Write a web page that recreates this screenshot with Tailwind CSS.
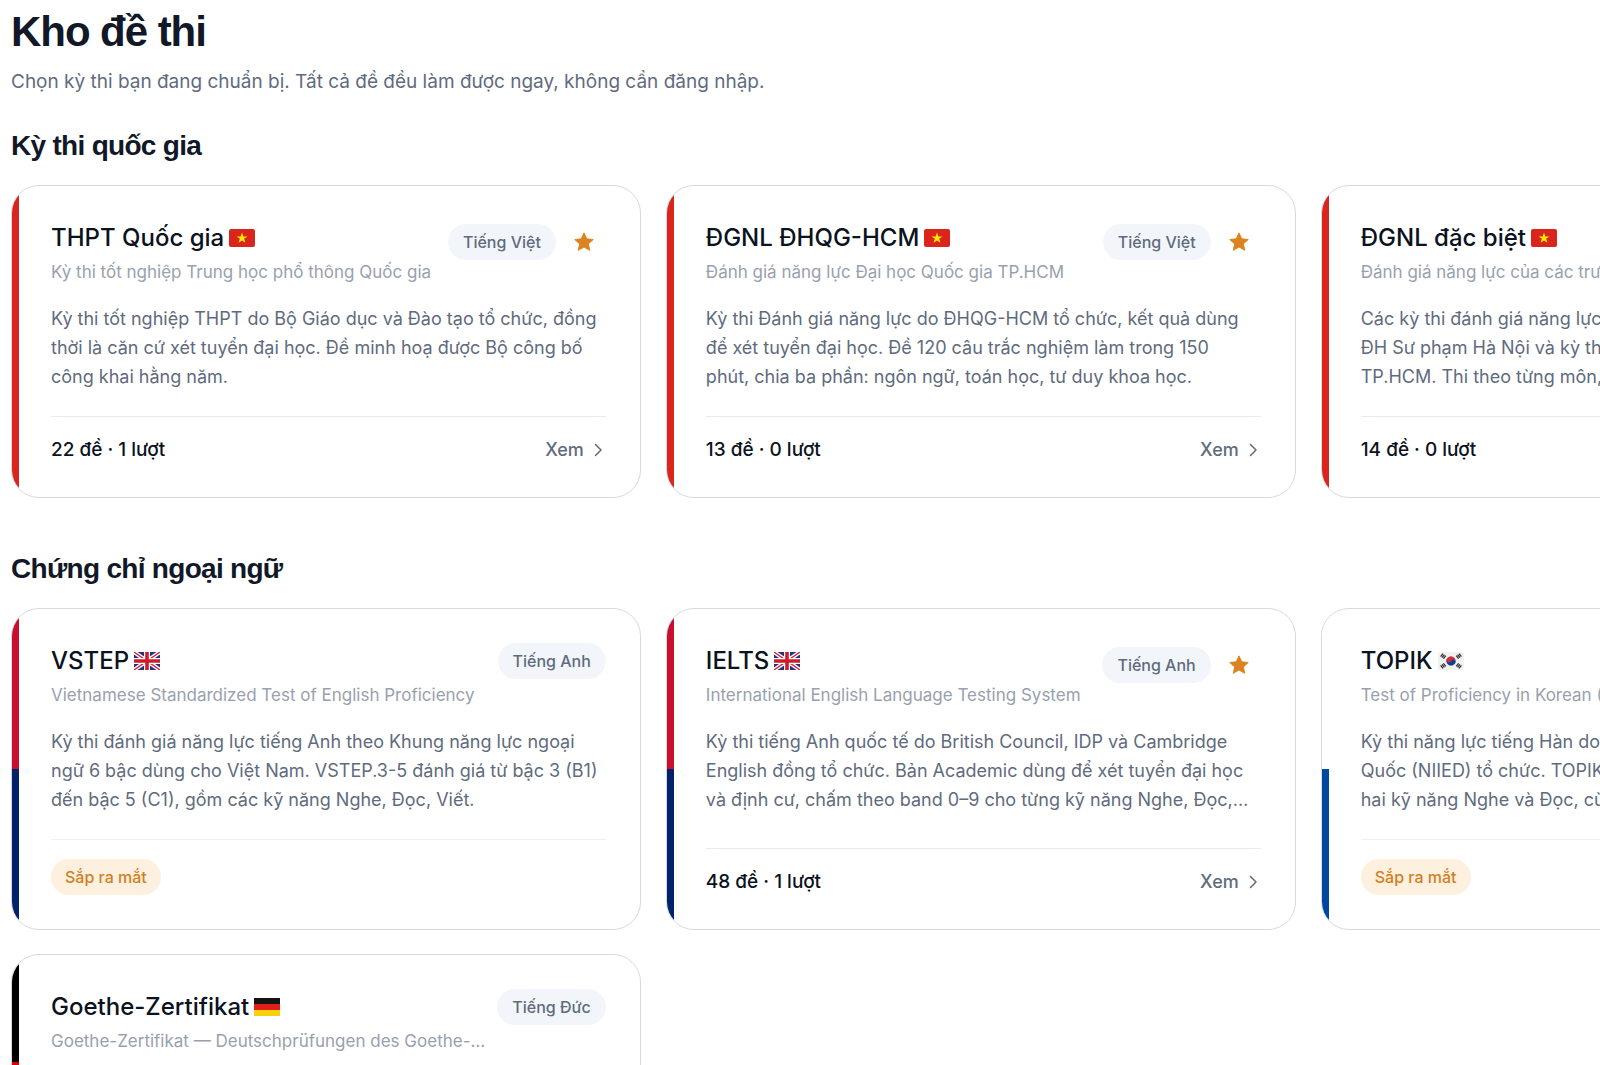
<!DOCTYPE html>
<html lang="vi">
<head>
  <meta charset="UTF-8" />
  <meta name="viewport" content="width=device-width, initial-scale=1.0" />
  <title>Kho đề thi</title>
  <script src="https://cdn.jsdelivr.net/npm/@tailwindcss/browser@4"></script>
</head>
<body class="bg-white overflow-x-hidden font-[Inter,'Noto_Sans',sans-serif] text-[#0b1220]">

  <!-- Biểu tượng dùng chung -->
  <svg class="hidden" aria-hidden="true">
    <symbol id="co-vn" viewBox="0 0 26 18">
      <rect width="26" height="18" rx="2" fill="#da251d" />
      <path d="M13 3.5l1.35 3.9h4.1l-3.3 2.45 1.25 3.95L13 11.4l-3.4 2.4 1.25-3.95-3.3-2.45h4.1z" fill="#ffeb00" />
    </symbol>
    <symbol id="co-anh" viewBox="0 0 26 18">
      <clipPath id="khung-anh"><rect width="26" height="18" rx="2" /></clipPath>
      <g clip-path="url(#khung-anh)">
        <rect width="26" height="18" fill="#2a3080" />
        <path d="M0 0l26 18M26 0L0 18" stroke="#fff" stroke-width="4" />
        <path d="M0 0l26 18M26 0L0 18" stroke="#cf1b2b" stroke-width="1.3" />
        <path d="M13 0v18M0 9h26" stroke="#fff" stroke-width="6" />
        <path d="M13 0v18M0 9h26" stroke="#cf1b2b" stroke-width="3.6" />
      </g>
    </symbol>
    <symbol id="co-han" viewBox="0 0 26 18">
      <rect width="26" height="18" rx="2" fill="#f1f1f1" />
      <g transform="rotate(22 13 9)">
        <path d="M8.3 9a4.7 4.7 0 0 1 9.4 0z" fill="#cd2e3a" />
        <path d="M8.3 9a4.7 4.7 0 0 0 9.4 0z" fill="#0f3f96" />
        <circle cx="10.65" cy="9" r="2.35" fill="#cd2e3a" />
        <circle cx="15.35" cy="9" r="2.35" fill="#0f3f96" />
      </g>
      <g stroke="#2b2b2b" stroke-width="1.2">
        <path d="M2.6 4.6l2.4-3M4 5.6l2.4-3M5.4 6.6l2.4-3" />
        <path d="M23.4 4.6l-2.4-3M22 5.6l-2.4-3M20.6 6.6l-2.4-3" />
        <path d="M2.6 13.4l2.4 3M4 12.4l2.4 3M5.4 11.4l2.4 3" />
        <path d="M23.4 13.4l-2.4 3M22 12.4l-2.4 3M20.6 11.4l-2.4 3" />
      </g>
    </symbol>
    <symbol id="co-duc" viewBox="0 0 26 18">
      <clipPath id="khung-duc"><rect width="26" height="18" rx="2" /></clipPath>
      <g clip-path="url(#khung-duc)">
        <rect width="26" height="6" fill="#141414" />
        <rect y="6" width="26" height="6" fill="#e01f1b" />
        <rect y="12" width="26" height="6" fill="#f8d00e" />
      </g>
    </symbol>
    <symbol id="sao" viewBox="0 0 24 24">
      <path d="M12 2l3 6.500 7.100.800-5.300 4.800 1.500 7-6.300-3.600-6.300 3.600 1.500-7L1.900 9.300 9 8.500z" fill="#dc821e" stroke="#dc821e" stroke-width="1" stroke-linejoin="round" />
    </symbol>
    <symbol id="mui-ten" viewBox="0 0 16 16">
      <path d="M5.500 2.500L11 8l-5.500 5.500" fill="none" stroke="currentColor" stroke-width="1.500" stroke-linecap="round" stroke-linejoin="round" />
    </symbol>
  </svg>

  <main class="w-[122.6vw] px-[11px] pt-2 pb-12">
    <h1 class="font-['Liberation_Sans',sans-serif] text-[42px] leading-12 font-bold tracking-tight text-[#111827]">Kho đề thi</h1>
    <p class="mt-3 text-[19px] leading-7 text-[#5f6b7e]">Chọn kỳ thi bạn đang chuẩn bị. Tất cả đề đều làm được ngay, không cần đăng nhập.</p>

    <section class="mt-8">
      <h2 class="font-['Liberation_Sans',sans-serif] text-[28px] leading-9 font-bold tracking-tight text-[#111827]">Kỳ thi quốc gia</h2>
      <div class="mt-[21px] grid grid-cols-3 gap-x-[25px] gap-y-6">

        <article class="flex overflow-hidden rounded-[28px] border border-[#d5dae1] bg-white">
          <div class="w-[7px] shrink-0 bg-[#da251d]"></div>
          <div class="flex min-w-0 grow flex-col py-[34px] pr-[34px] pl-8">
            <div class="flex items-start justify-between gap-3">
              <div class="min-w-0 pt-[2px]">
                <h3 class="flex items-center gap-[5px] text-2xl font-medium whitespace-nowrap">THPT Quốc gia <svg class="h-[18px] w-[26px]"><use href="#co-vn" /></svg></h3>
                <p class="mt-1 line-clamp-1 text-[17px] leading-7 text-[#98a1ae]">Kỳ thi tốt nghiệp Trung học phổ thông Quốc gia</p>
              </div>
              <div class="flex shrink-0 items-center gap-[6px]">
                <span class="rounded-full bg-[#f2f6fa] px-[15px] text-base leading-9 font-medium text-[#5f6b7e]">Tiếng Việt</span>
                <button type="button" aria-label="Bỏ ghim THPT Quốc gia" class="flex size-11 items-center justify-center"><svg class="size-[22px]"><use href="#sao" /></svg></button>
              </div>
            </div>
            <p class="mt-[18px] mb-[25px] line-clamp-3 pr-[5px] text-lg leading-[29px] text-[#5f6b7e]">Kỳ thi tốt nghiệp THPT do Bộ Giáo dục và Đào tạo tổ chức, đồng thời là căn cứ xét tuyển đại học. Đề minh hoạ được Bộ công bố công khai hằng năm.</p>
            <div class="mt-auto flex items-center justify-between border-t border-[#e8ebef] pt-5 text-lg leading-[26px] font-medium">
              <span class="text-[19px]">22 đề · 1 lượt</span>
              <a href="#" class="flex items-center gap-[6px] text-[#5f6b7e]">Xem <svg class="size-4"><use href="#mui-ten" /></svg></a>
            </div>
          </div>
        </article>

        <article class="flex overflow-hidden rounded-[28px] border border-[#d5dae1] bg-white">
          <div class="w-[7px] shrink-0 bg-[#da251d]"></div>
          <div class="flex min-w-0 grow flex-col py-[34px] pr-[34px] pl-8">
            <div class="flex items-start justify-between gap-3">
              <div class="min-w-0 pt-[2px]">
                <h3 class="flex items-center gap-[5px] text-2xl font-medium whitespace-nowrap">ĐGNL ĐHQG-HCM <svg class="h-[18px] w-[26px]"><use href="#co-vn" /></svg></h3>
                <p class="mt-1 line-clamp-1 text-[17px] leading-7 text-[#98a1ae]">Đánh giá năng lực Đại học Quốc gia TP.HCM</p>
              </div>
              <div class="flex shrink-0 items-center gap-[6px]">
                <span class="rounded-full bg-[#f2f6fa] px-[15px] text-base leading-9 font-medium text-[#5f6b7e]">Tiếng Việt</span>
                <button type="button" aria-label="Bỏ ghim ĐGNL ĐHQG-HCM" class="flex size-11 items-center justify-center"><svg class="size-[22px]"><use href="#sao" /></svg></button>
              </div>
            </div>
            <p class="mt-[18px] mb-[25px] line-clamp-3 pr-[5px] text-lg leading-[29px] text-[#5f6b7e]">Kỳ thi Đánh giá năng lực do ĐHQG-HCM tổ chức, kết quả dùng để xét tuyển đại học. Đề 120 câu trắc nghiệm làm trong 150 phút, chia ba phần: ngôn ngữ, toán học, tư duy khoa học.</p>
            <div class="mt-auto flex items-center justify-between border-t border-[#e8ebef] pt-5 text-lg leading-[26px] font-medium">
              <span class="text-[19px]">13 đề · 0 lượt</span>
              <a href="#" class="flex items-center gap-[6px] text-[#5f6b7e]">Xem <svg class="size-4"><use href="#mui-ten" /></svg></a>
            </div>
          </div>
        </article>

        <article class="flex overflow-hidden rounded-[28px] border border-[#d5dae1] bg-white">
          <div class="w-[7px] shrink-0 bg-[#da251d]"></div>
          <div class="flex min-w-0 grow flex-col py-[34px] pr-[34px] pl-8">
            <div class="flex items-start justify-between gap-3">
              <div class="min-w-0 pt-[2px]">
                <h3 class="flex items-center gap-[5px] text-2xl font-medium whitespace-nowrap">ĐGNL đặc biệt <svg class="h-[18px] w-[26px]"><use href="#co-vn" /></svg></h3>
                <p class="mt-1 line-clamp-1 text-[17px] leading-7 text-[#98a1ae]">Đánh giá năng lực của các trường đại học</p>
              </div>
              <span class="shrink-0 rounded-full bg-[#f2f6fa] px-[15px] text-base leading-9 font-medium text-[#5f6b7e]">Tiếng Việt</span>
            </div>
            <p class="mt-[18px] mb-[25px] line-clamp-3 pr-[5px] text-lg leading-[29px] text-[#5f6b7e]">Các kỳ thi đánh giá năng lực chuyên biệt của Trường<br />ĐH Sư phạm Hà Nội và kỳ thi của Trường ĐH Sư phạm<br />TP.HCM. Thi theo từng môn, dùng để xét tuyển.</p>
            <div class="mt-auto flex items-center justify-between border-t border-[#e8ebef] pt-5 text-lg leading-[26px] font-medium">
              <span class="text-[19px]">14 đề · 0 lượt</span>
              <a href="#" class="flex items-center gap-[6px] text-[#5f6b7e]">Xem <svg class="size-4"><use href="#mui-ten" /></svg></a>
            </div>
          </div>
        </article>

      </div>
    </section>

    <section class="mt-[53px]">
      <h2 class="font-['Liberation_Sans',sans-serif] text-[28px] leading-9 font-bold tracking-tight text-[#111827]">Chứng chỉ ngoại ngữ</h2>
      <div class="mt-[21px] grid grid-cols-3 gap-x-[25px] gap-y-6">

        <article class="flex overflow-hidden rounded-[28px] border border-[#d5dae1] bg-white">
          <div class="flex w-[7px] shrink-0 flex-col">
            <div class="grow bg-[#c8102e]"></div>
            <div class="grow bg-[#012169]"></div>
          </div>
          <div class="flex min-w-0 grow flex-col py-[34px] pr-[34px] pl-8">
            <div class="flex items-start justify-between gap-3">
              <div class="min-w-0 pt-[2px]">
                <h3 class="flex items-center gap-[5px] text-2xl font-medium whitespace-nowrap">VSTEP <svg class="h-[18px] w-[26px]"><use href="#co-anh" /></svg></h3>
                <p class="mt-1 line-clamp-1 text-[17px] leading-7 text-[#98a1ae]">Vietnamese Standardized Test of English Proficiency</p>
              </div>
              <span class="shrink-0 rounded-full bg-[#f2f6fa] px-[15px] text-base leading-9 font-medium text-[#5f6b7e]">Tiếng Anh</span>
            </div>
            <p class="mt-[18px] mb-[25px] line-clamp-3 pr-[5px] text-lg leading-[29px] text-[#5f6b7e]">Kỳ thi đánh giá năng lực tiếng Anh theo Khung năng lực ngoại ngữ 6 bậc dùng cho Việt Nam. VSTEP.3-5 đánh giá từ bậc 3 (B1) đến bậc 5 (C1), gồm các kỹ năng Nghe, Đọc, Viết.</p>
            <div class="mt-auto flex border-t border-[#eef0f3] pt-[19px]">
              <span class="rounded-full bg-[#fdf0de] px-[14px] text-base leading-9 font-medium text-[#d08023]">Sắp ra mắt</span>
            </div>
          </div>
        </article>

        <article class="flex overflow-hidden rounded-[28px] border border-[#d5dae1] bg-white">
          <div class="flex w-[7px] shrink-0 flex-col">
            <div class="grow bg-[#c8102e]"></div>
            <div class="grow bg-[#012169]"></div>
          </div>
          <div class="flex min-w-0 grow flex-col py-[34px] pr-[34px] pl-8">
            <div class="flex items-start justify-between gap-3">
              <div class="min-w-0 pt-[2px]">
                <h3 class="flex items-center gap-[5px] text-2xl font-medium whitespace-nowrap">IELTS <svg class="h-[18px] w-[26px]"><use href="#co-anh" /></svg></h3>
                <p class="mt-1 line-clamp-1 text-[17px] leading-7 text-[#98a1ae]">International English Language Testing System</p>
              </div>
              <div class="flex shrink-0 items-center gap-[6px]">
                <span class="rounded-full bg-[#f2f6fa] px-[15px] text-base leading-9 font-medium text-[#5f6b7e]">Tiếng Anh</span>
                <button type="button" aria-label="Bỏ ghim IELTS" class="flex size-11 items-center justify-center"><svg class="size-[22px]"><use href="#sao" /></svg></button>
              </div>
            </div>
            <p class="mt-[18px] mb-[25px] line-clamp-3 pr-[5px] text-lg leading-[29px] text-[#5f6b7e]">Kỳ thi tiếng Anh quốc tế do British Council, IDP và Cambridge English đồng tổ chức. Bản Academic dùng để xét tuyển đại học và định cư, chấm theo band 0–9 cho từng kỹ năng Nghe, Đọc, Viết, Nói.</p>
            <div class="mt-auto flex items-center justify-between border-t border-[#e8ebef] pt-5 text-lg leading-[26px] font-medium">
              <span class="text-[19px]">48 đề · 1 lượt</span>
              <a href="#" class="flex items-center gap-[6px] text-[#5f6b7e]">Xem <svg class="size-4"><use href="#mui-ten" /></svg></a>
            </div>
          </div>
        </article>

        <article class="flex overflow-hidden rounded-[28px] border border-[#d5dae1] bg-white">
          <div class="flex w-[7px] shrink-0 flex-col">
            <div class="grow bg-white"></div>
            <div class="grow bg-[#0047a0]"></div>
          </div>
          <div class="flex min-w-0 grow flex-col py-[34px] pr-[34px] pl-8">
            <div class="flex items-start justify-between gap-3">
              <div class="min-w-0 pt-[2px]">
                <h3 class="flex items-center gap-[5px] text-2xl font-medium whitespace-nowrap">TOPIK <svg class="h-[18px] w-[26px]"><use href="#co-han" /></svg></h3>
                <p class="mt-1 line-clamp-1 text-[17px] leading-7 text-[#98a1ae]">Test of Proficiency in Korean (TOPIK)</p>
              </div>
              <span class="shrink-0 rounded-full bg-[#f2f6fa] px-[15px] text-base leading-9 font-medium text-[#5f6b7e]">Tiếng Hàn</span>
            </div>
            <p class="mt-[18px] mb-[25px] line-clamp-3 pr-[5px] text-lg leading-[29px] text-[#5f6b7e]">Kỳ thi năng lực tiếng Hàn do Viện Giáo dục Quốc tế<br />Quốc (NIIED) tổ chức. TOPIK I dành cho sơ cấp, gồm<br />hai kỹ năng Nghe và Đọc, cùng một thang điểm.</p>
            <div class="mt-auto flex border-t border-[#eef0f3] pt-[19px]">
              <span class="rounded-full bg-[#fdf0de] px-[14px] text-base leading-9 font-medium text-[#d08023]">Sắp ra mắt</span>
            </div>
          </div>
        </article>

        <article class="flex overflow-hidden rounded-[28px] border border-[#d5dae1] bg-white">
          <div class="flex w-[7px] shrink-0 flex-col">
            <div class="grow bg-black"></div>
            <div class="grow bg-[#dd0000]"></div>
            <div class="grow bg-[#ffce00]"></div>
          </div>
          <div class="flex min-w-0 grow flex-col py-[34px] pr-[34px] pl-8">
            <div class="flex items-start justify-between gap-3">
              <div class="min-w-0 pt-[2px]">
                <h3 class="flex items-center gap-[5px] text-2xl font-medium whitespace-nowrap">Goethe-Zertifikat <svg class="h-[18px] w-[26px]"><use href="#co-duc" /></svg></h3>
                <p class="mt-1 line-clamp-1 text-[17px] leading-7 text-[#98a1ae]">Goethe-Zertifikat — Deutschprüfungen des Goethe-Instituts</p>
              </div>
              <span class="shrink-0 rounded-full bg-[#f2f6fa] px-[15px] text-base leading-9 font-medium text-[#5f6b7e]">Tiếng Đức</span>
            </div>
            <p class="mt-[18px] mb-[25px] line-clamp-3 pr-[5px] text-lg leading-[29px] text-[#5f6b7e]">Kỳ thi tiếng Đức do Viện Goethe tổ chức, được công nhận trên toàn thế giới. Đề gồm các trình độ từ A1 đến C2, kiểm tra bốn kỹ năng Nghe, Nói, Đọc, Viết.</p>
            <div class="mt-auto flex border-t border-[#eef0f3] pt-[19px]">
              <span class="rounded-full bg-[#fdf0de] px-[14px] text-base leading-9 font-medium text-[#d08023]">Sắp ra mắt</span>
            </div>
          </div>
        </article>

      </div>
    </section>
  </main>

</body>
</html>
